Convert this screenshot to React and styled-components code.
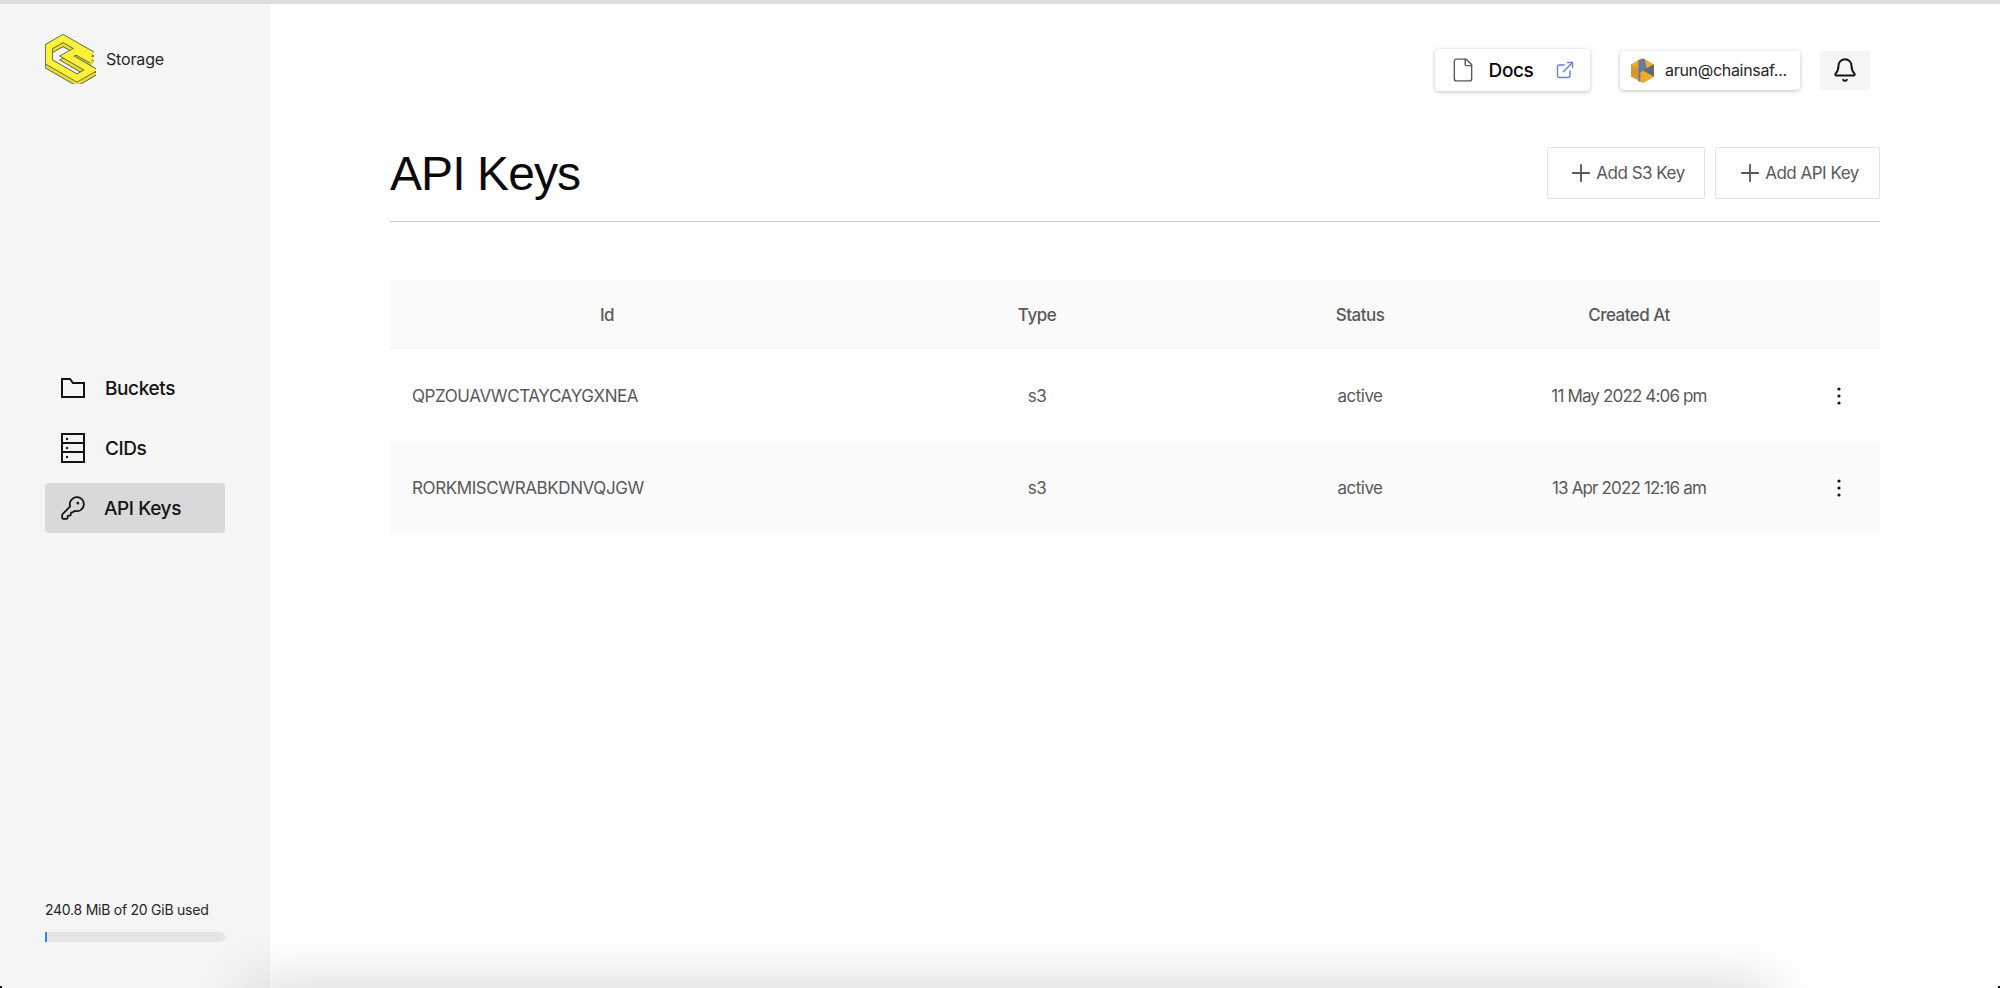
import React from 'react';
import styled, { createGlobalStyle } from 'styled-components';
import { Bell, ExternalLink, File, KeyRound, Plus } from 'lucide-react';

const GlobalStyle = createGlobalStyle`
  html, body {
    margin: 0;
    height: 100%;
    background: #fff;
  }
  body {
    font-family: Inter, "Liberation Sans", sans-serif;
    overflow: hidden;
  }
`;

const Page = styled.div`
  display: flex;
  height: 988px;
  box-sizing: border-box;
  border-top: 4px solid #dedede;
`;

const Sidebar = styled.aside`
  flex: 0 0 270px;
  box-sizing: border-box;
  display: flex;
  flex-direction: column;
  padding: 30px 45px 46px;
  background: #f5f5f5;
`;

const Brand = styled.div`
  display: flex;
  align-items: center;
  gap: 10px;
  height: 50px;
  font-size: 16px;
  letter-spacing: -0.15px;
  color: #262626;
`;

const Nav = styled.nav`
  display: flex;
  flex-direction: column;
  gap: 10px;
  margin-top: 279px;
`;

const NavItem = styled.a`
  display: flex;
  align-items: center;
  gap: 20px;
  height: 50px;
  padding: 0 16px;
  border-radius: 4px;
  font-size: 19px;
  font-weight: 500;
  letter-spacing: -0.4px;
  color: #141414;
  background: ${(p) => (p.$active ? '#d9d9d9' : 'transparent')};

  svg {
    flex: none;
  }
`;

const KeyIcon = styled(KeyRound)`
  margin: 0 -2px 0 -1px;
`;

const Usage = styled.div`
  margin-top: auto;
  font-size: 14px;
  letter-spacing: -0.25px;
  color: #262626;
`;

const UsageBar = styled.div`
  height: 10px;
  margin-top: 14px;
  border-radius: 5px;
  background: #e5e5e5;
`;

const UsageFill = styled.div`
  height: 100%;
  background: #1890ff;
`;

const Main = styled.main`
  flex: 1;
  padding: 45px 120px 0;
`;

const TopBar = styled.div`
  display: flex;
  justify-content: flex-end;
  align-items: center;
  height: 42px;
  margin-right: 10px;
`;

const DocsCard = styled.div`
  display: flex;
  align-items: center;
  justify-content: center;
  gap: 13px;
  width: 155px;
  height: 42px;
  border-radius: 4px;
  background: #fff;
  box-shadow: 0 1px 4px rgba(0, 0, 0, 0.25);
  font-size: 19px;
  font-weight: 500;
  letter-spacing: -0.4px;
  color: #0a0a0a;
`;

const DocsLabel = styled.span`
  margin-right: 9px;
`;

const AccountCard = styled.div`
  display: flex;
  align-items: center;
  gap: 10px;
  width: 180px;
  height: 39px;
  box-sizing: border-box;
  margin-left: 30px;
  padding-left: 10px;
  border-radius: 4px;
  background: #fff;
  box-shadow: 0 1px 4px rgba(0, 0, 0, 0.25);
  font-size: 16px;
  letter-spacing: -0.3px;
  color: #262626;
`;

const BellBox = styled.div`
  display: flex;
  align-items: center;
  justify-content: center;
  width: 50px;
  height: 39px;
  margin-left: 20px;
  border-radius: 2px;
  background: #f5f5f5;
`;

const TitleRow = styled.div`
  display: flex;
  align-items: center;
  justify-content: space-between;
  height: 52px;
  margin-top: 56px;
  padding-bottom: 22px;
  border-bottom: 1px solid #d0d0d0;
`;

const Title = styled.h1`
  margin: 0;
  font-family: "Liberation Sans", Inter, sans-serif;
  font-size: 48px;
  font-weight: 400;
  letter-spacing: -0.9px;
  color: #0a0a0a;
`;

const Actions = styled.div`
  display: flex;
  gap: 10px;
`;

const AddButton = styled.button`
  display: flex;
  align-items: center;
  justify-content: center;
  gap: 1px;
  width: ${(p) => p.$width}px;
  height: 52px;
  padding: 0;
  border: 1px solid #e3e3e3;
  border-radius: 2px;
  background: #fff;
  font-family: inherit;
  font-size: 17px;
  letter-spacing: -0.5px;
  color: #595959;
`;

const Table = styled.div`
  margin-top: 58px;
`;

const Row = styled.div`
  display: grid;
  grid-template-columns: 434px 426px 220px 318px 92px;
  align-items: center;
  height: 92px;
  padding-top: 2px;
  box-sizing: border-box;
  font-size: 17px;
  letter-spacing: -0.4px;
  color: #595959;
  background: ${(p) => (p.$shade ? '#fafafa' : '#fff')};
`;

const HeadRow = styled(Row)`
  height: 69px;
  border-bottom: 1px solid #f0f0f0;
  background: #fafafa;
  font-weight: 500;
`;

const Cell = styled.div`
  text-align: center;
  letter-spacing: ${(p) => p.$spacing || '-0.5px'};
`;

const IdCell = styled.div`
  padding-left: 22px;
  white-space: nowrap;
`;

const MenuDots = styled.div`
  display: flex;
  justify-content: center;
  padding-left: 10px;
`;

const BottomShade = styled.div`
  position: fixed;
  left: 262px;
  right: 240px;
  top: 1000px;
  height: 20px;
  box-shadow: 0 0 60px 10px rgba(0, 0, 0, 0.22);
  pointer-events: none;
`;

const WindowCorner = styled.div`
  position: fixed;
  bottom: 0;
  ${(p) => p.$side}: 0;
  width: 2px;
  height: 2px;
  background: #111;
`;

function Logo() {
  const arm = 'M47 21 L18 4.5 L4 12.5 L4 28 L32 44 L46 36 L22 22 L31 17 L47 26';
  return (
    <svg width="51" height="50" viewBox="0 0 51 50" fill="none">
      <g transform="translate(0 4)">
        <path d={arm} stroke="#5a5a4a" strokeWidth="8" />
        <path d={arm} stroke="#e8e02c" strokeWidth="6.4" />
      </g>
      <path d={arm} stroke="#5a5a4a" strokeWidth="8" />
      <path d={arm} stroke="#f8f23a" strokeWidth="6.4" />
    </svg>
  );
}

function FolderIcon() {
  return (
    <svg width="24" height="20" viewBox="0 0 24 20" fill="none" stroke="#141414" strokeWidth="2">
      <path d="M1 1 H9 L12 5 H23 V19 H1 Z" />
    </svg>
  );
}

function ServerIcon() {
  return (
    <svg width="24" height="30" viewBox="0 0 24 30" fill="none" stroke="#141414" strokeWidth="2">
      <rect x="1" y="1" width="22" height="28" />
      <path d="M1 10 H23 M1 19 H23" />
      <circle cx="6" cy="6" r="1.2" fill="#141414" stroke="none" />
      <circle cx="6" cy="15" r="1.2" fill="#141414" stroke="none" />
      <circle cx="6" cy="24" r="1.2" fill="#141414" stroke="none" />
    </svg>
  );
}

function Avatar() {
  return (
    <svg width="25" height="25" viewBox="0 0 24 24" style={{ flex: 'none' }}>
      <polygon points="12,0 23,6 23,18 12,24 1,18 1,6" fill="#f2ab2b" />
      <polygon points="1,6 8,10 8,20 1,18" fill="#d9952e" />
      <polygon points="8,2 14,0.8 16,10 10,14 10,23 8,22" fill="#64799b" />
      <polygon points="12,12 23,6 23,18" fill="#5c6b7c" />
      <polygon points="12,12 23,18 12,24" fill="#f0a92c" />
    </svg>
  );
}

function Dots() {
  return (
    <svg width="4" height="18" viewBox="0 0 4 18" fill="#141414">
      <circle cx="2" cy="2" r="1.6" />
      <circle cx="2" cy="9" r="1.6" />
      <circle cx="2" cy="16" r="1.6" />
    </svg>
  );
}

const keys = [
  { id: 'QPZOUAVWCTAYCAYGXNEA', type: 's3', status: 'active', created: '11 May 2022 4:06 pm' },
  { id: 'RORKMISCWRABKDNVQJGW', type: 's3', status: 'active', created: '13 Apr 2022 12:16 am' },
];

export default function App() {
  return (
    <>
      <GlobalStyle />
      <Page>
        <Sidebar>
          <Brand>
            <Logo />
            Storage
          </Brand>
          <Nav>
            <NavItem><FolderIcon />Buckets</NavItem>
            <NavItem><ServerIcon />CIDs</NavItem>
            <NavItem $active><KeyIcon size={26} strokeWidth={1.6} color="#141414" />API Keys</NavItem>
          </Nav>
          <Usage>
            240.8 MiB of 20 GiB used
            <UsageBar>
              <UsageFill style={{ width: '1.2%' }} />
            </UsageBar>
          </Usage>
        </Sidebar>
        <Main>
          <TopBar>
            <DocsCard>
              <File size={26} strokeWidth={1.3} color="#595959" />
              <DocsLabel>Docs</DocsLabel>
              <ExternalLink size={20} strokeWidth={1.7} color="#6a7ef0" />
            </DocsCard>
            <AccountCard>
              <Avatar />
              arun@chainsaf...
            </AccountCard>
            <BellBox>
              <Bell size={26} strokeWidth={1.8} color="#141414" />
            </BellBox>
          </TopBar>
          <TitleRow>
            <Title>API Keys</Title>
            <Actions>
              <AddButton $width={158}><Plus size={28} strokeWidth={1.6} />Add S3 Key</AddButton>
              <AddButton $width={165}><Plus size={28} strokeWidth={1.6} />Add API Key</AddButton>
            </Actions>
          </TitleRow>
          <Table>
            <HeadRow>
              <Cell>Id</Cell>
              <Cell>Type</Cell>
              <Cell>Status</Cell>
              <Cell>Created At</Cell>
              <Cell />
            </HeadRow>
            {keys.map((key, i) => (
              <Row key={key.id} $shade={i % 2 === 1}>
                <IdCell>{key.id}</IdCell>
                <Cell>{key.type}</Cell>
                <Cell>{key.status}</Cell>
                <Cell $spacing="-0.85px">{key.created}</Cell>
                <MenuDots><Dots /></MenuDots>
              </Row>
            ))}
          </Table>
        </Main>
      </Page>
      <BottomShade />
      <WindowCorner $side="left" />
      <WindowCorner $side="right" />
    </>
  );
}
